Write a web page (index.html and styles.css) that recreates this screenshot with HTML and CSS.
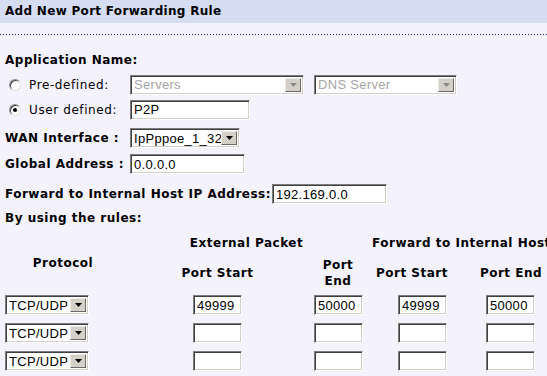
FILE: index.html
```html
<!DOCTYPE html>
<html lang="en">
<head>
  <meta charset="UTF-8" />
  <title>Add New Port Forwarding Rule</title>
  <link rel="stylesheet" href="styles.css">
</head>
<body>
  <div class="title">Add New Port Forwarding Rule</div>
  <div class="dots"></div>

  <form class="form">
    <div class="row row-app"><b>Application Name:</b></div>

    <div class="row row-pre">
      <label class="opt"><input type="radio" name="app" class="radio"> Pre-defined:</label>
      <span class="sel sel-servers disabled">
        <select disabled><option>Servers</option></select>
        <span class="arrow"><svg viewBox="0 0 7 4"><path d="M0 0h7L3.5 4z"/></svg></span>
      </span>
      <span class="sel sel-dns disabled">
        <select disabled><option>DNS Server</option></select>
        <span class="arrow"><svg viewBox="0 0 7 4"><path d="M0 0h7L3.5 4z"/></svg></span>
      </span>
    </div>

    <div class="row row-user">
      <label class="opt"><input type="radio" name="app" class="radio" checked> User defined:</label>
      <input type="text" class="txt txt-user" value="P2P">
    </div>

    <div class="row row-wan">
      <b class="lbl">WAN Interface :</b>
      <span class="sel sel-wan">
        <select><option>IpPppoe_1_32</option></select>
        <span class="arrow"><svg viewBox="0 0 7 4"><path d="M0 0h7L3.5 4z"/></svg></span>
      </span>
    </div>

    <div class="row row-global">
      <b class="lbl">Global Address :</b>
      <input type="text" class="txt txt-global" value="0.0.0.0">
    </div>

    <div class="row row-fwd">
      <b>Forward to Internal Host IP Address:</b><input type="text" class="txt txt-ip" value="192.169.0.0">
    </div>

    <div class="row row-rules"><b>By using the rules:</b></div>

    <table class="rules">
      <colgroup>
        <col class="c-proto"><col class="c-start"><col class="c-end"><col class="c-istart"><col class="c-iend">
      </colgroup>
      <thead>
        <tr class="head-a">
          <th rowspan="2" class="h-proto">Protocol</th>
          <th colspan="2">External Packet</th>
          <th colspan="2" class="h-fwd">Forward to Internal Host</th>
        </tr>
        <tr class="head-b">
          <th>Port Start</th>
          <th class="h-end">Port End</th>
          <th class="h-istart">Port Start</th>
          <th>Port End</th>
        </tr>
      </thead>
      <tbody>
        <tr>
          <td class="left"><span class="sel sel-proto"><select><option>TCP/UDP</option></select><span class="arrow"><svg viewBox="0 0 7 4"><path d="M0 0h7L3.5 4z"/></svg></span></span></td>
          <td><input type="text" class="txt port" value="49999"></td>
          <td class="left"><input type="text" class="txt port" value="50000"></td>
          <td class="i-start"><input type="text" class="txt port" value="49999"></td>
          <td class="i-end"><input type="text" class="txt port" value="50000"></td>
        </tr>
        <tr>
          <td class="left"><span class="sel sel-proto"><select><option>TCP/UDP</option></select><span class="arrow"><svg viewBox="0 0 7 4"><path d="M0 0h7L3.5 4z"/></svg></span></span></td>
          <td><input type="text" class="txt port"></td>
          <td class="left"><input type="text" class="txt port"></td>
          <td class="i-start"><input type="text" class="txt port"></td>
          <td class="i-end"><input type="text" class="txt port"></td>
        </tr>
        <tr>
          <td class="left"><span class="sel sel-proto"><select><option>TCP/UDP</option></select><span class="arrow"><svg viewBox="0 0 7 4"><path d="M0 0h7L3.5 4z"/></svg></span></span></td>
          <td><input type="text" class="txt port"></td>
          <td class="left"><input type="text" class="txt port"></td>
          <td class="i-start"><input type="text" class="txt port"></td>
          <td class="i-end"><input type="text" class="txt port"></td>
        </tr>
      </tbody>
    </table>
  </form>
</body>
</html>
```

FILE: styles.css
```css
body {
  margin: 0;
  background: #f4f2fd;
  color: #000;
  font-family: "DejaVu Sans", Verdana, sans-serif;
  font-size: 12px;
  letter-spacing: 0.6px;
  overflow: hidden;
}

b, th {
  letter-spacing: 0.5px;
}

.title {
  height: 23px;
  line-height: 23px;
  padding-left: 5px;
  background: #d6ddf3;
  font-weight: bold;
  letter-spacing: 0.3px;
}

.dots {
  height: 1px;
  margin-top: 11px;
  background: repeating-linear-gradient(to right, #1b2277 0 1px, transparent 1px 3px);
}

.form {
  padding-left: 5px;
  margin-top: 13px;
}

.row {
  display: flex;
  align-items: center;
  height: 24px;
}

.row-pre { height: 25px; }
.row-user { height: 25px; }
.row-wan { height: 28px; margin-top: 2px; }
.row-global { height: 24px; }
.row-fwd { height: 24px; margin-top: 6px; }
.row-rules { height: 24px; }

.opt {
  display: flex;
  align-items: center;
  width: 125px;
}

.lbl {
  width: 125px;
}

/* classic windows radio */
.radio {
  appearance: none;
  width: 12px;
  height: 12px;
  margin: 0 8px 0 4px;
  border-radius: 50%;
  background: #fff;
  border: 1px solid;
  border-color: #8a8a8a #e4e2dc #e4e2dc #8a8a8a;
  box-shadow: inset 1px 1px 0 #404040;
  position: relative;
}

.radio:checked::after {
  content: "";
  position: absolute;
  left: 3px;
  top: 3px;
  width: 4px;
  height: 4px;
  border-radius: 50%;
  background: #000;
}

/* sunken fields */
.txt, .sel {
  box-sizing: border-box;
  height: 20px;
  background: #fff;
  border: 1px solid;
  border-color: #7c7c7c #fff #fff #7c7c7c;
  box-shadow: inset 1px 1px 0 #404040, inset -1px -1px 0 #d4d0c8;
  font-family: "Liberation Sans", Arial, sans-serif;
  font-size: 13px;
  letter-spacing: 0.3px;
  color: #000;
}

.txt {
  padding: 0 0 0 3px;
  outline: none;
}

.sel {
  display: inline-flex;
  align-items: stretch;
  padding: 1px 2px 1px 2px;
}

.sel select {
  appearance: none;
  flex: 1;
  min-width: 0;
  border: none;
  background: transparent;
  padding: 0 0 0 1px;
  font: inherit;
  letter-spacing: inherit;
  color: inherit;
  outline: none;
}

.sel.disabled select {
  color: #808080;
}

.arrow {
  width: 14px;
  margin: 1px 0;
  display: flex;
  align-items: center;
  justify-content: center;
  background: #d4d0c8;
  border: 1px solid;
  border-color: #eeece6 #6a6a6a #6a6a6a #eeece6;
}

.arrow svg {
  width: 7px;
  height: 4px;
  fill: #000;
}

.sel.disabled .arrow svg {
  fill: #8a8a8a;
}

.sel-servers { width: 174px; }
.sel-dns { width: 143px; margin-left: 10px; }
.sel-wan { width: 110px; }
.sel-proto { width: 84px; }

.txt-user { width: 120px; }
.txt-global { width: 115px; }
.txt-ip { width: 115px; margin-left: 1px; }
.port { width: 49px; }

/* rules table */
.rules {
  table-layout: fixed;
  border-collapse: collapse;
  width: 555px;
  margin-top: 1px;
}

.c-proto { width: 116px; }
.c-start { width: 193px; }
.c-end { width: 58px; }
.c-istart { width: 90px; }
.c-iend { width: 98px; }

.rules th {
  padding: 0;
  font-weight: bold;
  text-align: center;
  white-space: nowrap;
  line-height: 16px;
}

.head-a { height: 24px; }
.head-b { height: 36px; }

.rules .h-proto { vertical-align: middle; padding-top: 4px; }
.rules .h-fwd { text-align: left; padding-left: 0; }
.rules .h-end { white-space: normal; padding-right: 10px; }
.rules .h-istart { padding-right: 10px; }

.rules td {
  padding: 0;
  height: 28px;
  text-align: center;
}

.rules td.left { text-align: left; }
.rules td.i-start { padding-left: 11px; }
.rules td.i-end { padding-left: 24px; text-align: left; }
```
